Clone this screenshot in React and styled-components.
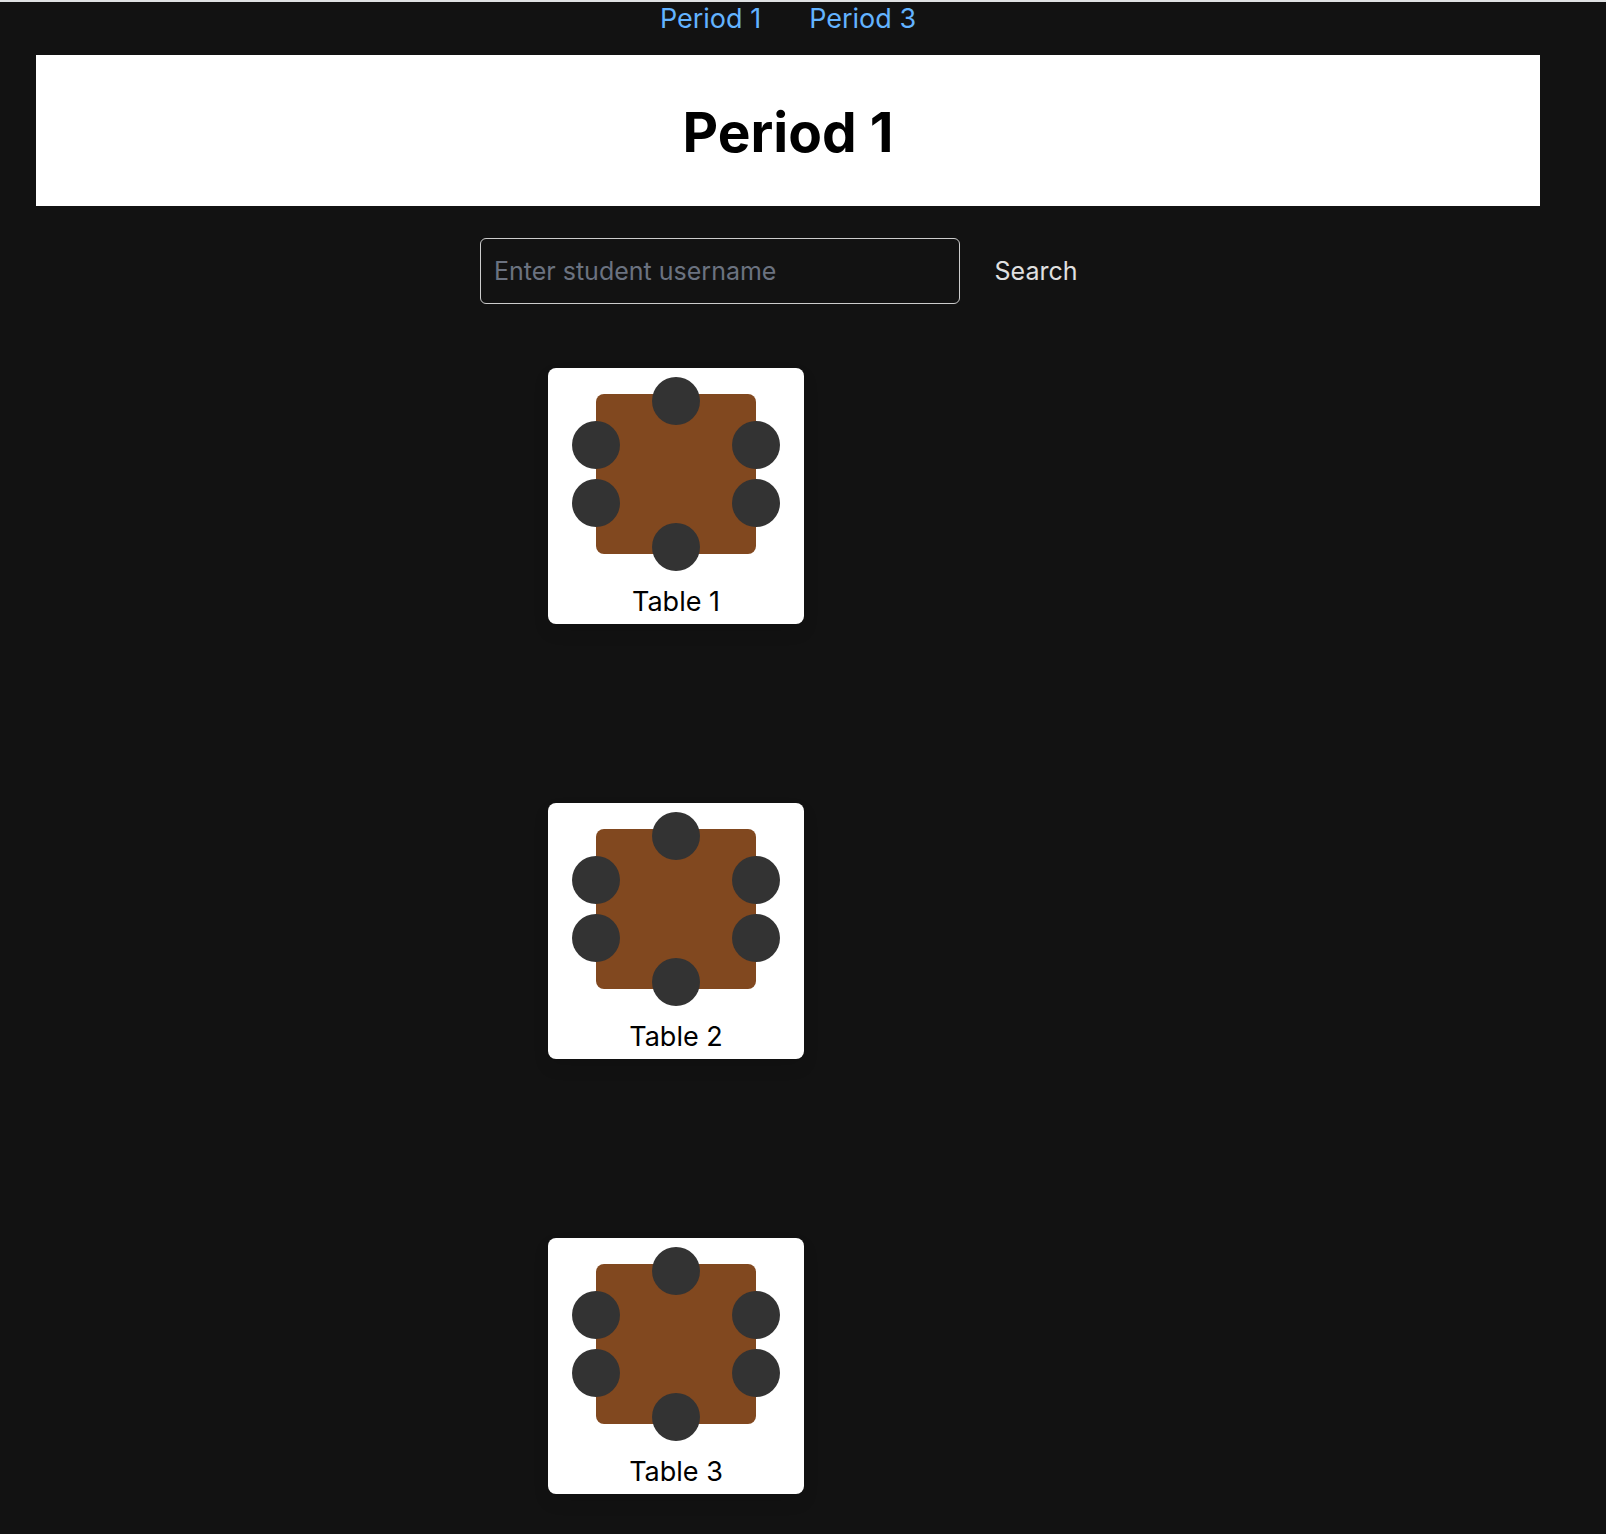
import React, { useState } from "react";
import styled, { createGlobalStyle } from "styled-components";

const GlobalStyle = createGlobalStyle`
  *, *::before, *::after { box-sizing: border-box; }
  body {
    margin: 0;
    background: #121212;
    color: #000;
    font-family: Inter, "Liberation Sans", sans-serif;
  }
`;

const Page = styled.div`
  min-height: 100vh;
  padding: 0 66px 40px 36px;
  border-top: 2px solid #dfe1e2;
  display: flex;
  flex-direction: column;
`;

const Nav = styled.nav`
  display: flex;
  justify-content: center;
  gap: 48px;
  padding-bottom: 19px;
`;

const NavLink = styled.a`
  color: #63b3ff;
  font-size: 27px;
  line-height: 34px;
  text-decoration: none;
`;

const Banner = styled.header`
  background: #fff;
  padding: 40px 24px 37px;
  text-align: center;
`;

const Title = styled.h1`
  margin: 0;
  font-size: 55px;
  line-height: 74px;
  font-weight: 700;
`;

const SearchForm = styled.form`
  display: flex;
  justify-content: center;
  align-items: stretch;
  gap: 16px;
  margin-top: 32px;
`;

const SearchInput = styled.input`
  width: 480px;
  min-width: 0;
  height: 66px;
  padding: 0 13px;
  border: 1px solid #ccc;
  border-radius: 6px;
  background: transparent;
  color: #e5e5e5;
  font: 25px Inter, "Liberation Sans", sans-serif;

  &::placeholder {
    color: #6b7280;
    opacity: 1;
  }
`;

const SearchButton = styled.button`
  width: 120px;
  padding: 0;
  border: 0;
  background: transparent;
  color: #e0e0e0;
  font: 25px Inter, "Liberation Sans", sans-serif;
  cursor: pointer;
`;

const Tables = styled.main`
  width: 100%;
  max-width: 480px;
  margin: 64px auto 0;
  display: flex;
  flex-direction: column;
  align-items: flex-start;
  gap: 179px;
`;

const Card = styled.section`
  width: 256px;
  height: 256px;
  padding-top: 26px;
  display: flex;
  flex-direction: column;
  align-items: center;
  gap: 31px;
  border-radius: 8px;
  background: #fff;
  box-shadow: 0 8px 16px rgba(0, 0, 0, 0.1);
`;

const TableTop = styled.div`
  position: relative;
  width: 160px;
  height: 160px;
  border-radius: 8px;
  background: #81481f;
`;

const Seat = styled.span`
  position: absolute;
  left: ${({ $x }) => $x}px;
  top: ${({ $y }) => $y}px;
  width: 48px;
  height: 48px;
  border-radius: 50%;
  background: #333;
`;

const CardLabel = styled.h2`
  margin: 0;
  font-size: 27px;
  line-height: 34px;
  font-weight: 400;
`;

const seats = [
  { x: 56, y: -17 },
  { x: -24, y: 27 },
  { x: 136, y: 27 },
  { x: -24, y: 85 },
  { x: 136, y: 85 },
  { x: 56, y: 129 },
];

const tables = ["Table 1", "Table 2", "Table 3"];

function TableCard({ name }) {
  return (
    <Card>
      <TableTop>
        {seats.map(({ x, y }) => (
          <Seat key={`${x}:${y}`} $x={x} $y={y} />
        ))}
      </TableTop>
      <CardLabel>{name}</CardLabel>
    </Card>
  );
}

export default function App() {
  const [username, setUsername] = useState("");

  return (
    <>
      <GlobalStyle />
      <Page>
        <Nav>
          <NavLink href="#period-1">Period 1</NavLink>
          <NavLink href="#period-3">Period 3</NavLink>
        </Nav>
        <Banner>
          <Title>Period 1</Title>
        </Banner>
        <SearchForm onSubmit={(event) => event.preventDefault()}>
          <SearchInput
            type="text"
            aria-label="Enter student username"
            placeholder="Enter student username"
            value={username}
            onChange={(event) => setUsername(event.target.value)}
          />
          <SearchButton type="submit">Search</SearchButton>
        </SearchForm>
        <Tables>
          {tables.map((name) => (
            <TableCard key={name} name={name} />
          ))}
        </Tables>
      </Page>
    </>
  );
}
